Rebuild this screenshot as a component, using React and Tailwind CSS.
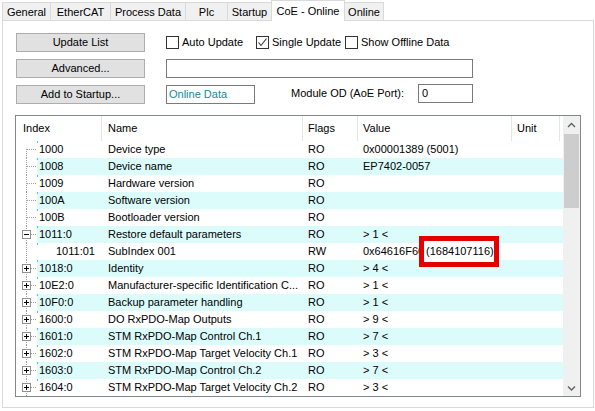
import React from "react";

const tabs = [
  { label: "General", w: "w-[48px]" },
  { label: "EtherCAT", w: "w-[60px]" },
  { label: "Process Data", w: "w-[75px]" },
  { label: "Plc", w: "w-[42px]" },
  { label: "Startup", w: "w-[44px]" },
  { label: "CoE - Online", w: "w-[74px]", active: true },
  { label: "Online", w: "w-[39px]", last: true },
];

const rows = [
  { idx: "1000", name: "Device type", flags: "RO", value: "0x00001389 (5001)" },
  { idx: "1008", name: "Device name", flags: "RO", value: "EP7402-0057" },
  { idx: "1009", name: "Hardware version", flags: "RO", value: "" },
  { idx: "100A", name: "Software version", flags: "RO", value: "" },
  { idx: "100B", name: "Bootloader version", flags: "RO", value: "" },
  { idx: "1011:0", name: "Restore default parameters", flags: "RO", value: "> 1 <", box: "minus" },
  { idx: "1011:01", name: "SubIndex 001", flags: "RW", value: "0x64616F60", child: true },
  { idx: "1018:0", name: "Identity", flags: "RO", value: "> 4 <", box: "plus" },
  { idx: "10E2:0", name: "Manufacturer-specific Identification C...", flags: "RO", value: "> 1 <", box: "plus" },
  { idx: "10F0:0", name: "Backup parameter handling", flags: "RO", value: "> 1 <", box: "plus" },
  { idx: "1600:0", name: "DO RxPDO-Map Outputs", flags: "RO", value: "> 9 <", box: "plus" },
  { idx: "1601:0", name: "STM RxPDO-Map Control Ch.1", flags: "RO", value: "> 7 <", box: "plus" },
  { idx: "1602:0", name: "STM RxPDO-Map Target Velocity Ch.1", flags: "RO", value: "> 3 <", box: "plus" },
  { idx: "1603:0", name: "STM RxPDO-Map Control Ch.2", flags: "RO", value: "> 7 <", box: "plus" },
  { idx: "1604:0", name: "STM RxPDO-Map Target Velocity Ch.2", flags: "RO", value: "> 3 <", box: "plus" },
];

function Btn({ children }) {
  return (
    <div className="w-[129px] h-[19px] bg-[#e1e1e1] border border-[#adadad] flex items-center justify-center">
      {children}
    </div>
  );
}

function Check({ label, checked, w }) {
  return (
    <div className={`flex items-center gap-[3px] ${w}`}>
      <div className="w-[13px] h-[13px] border border-[#333333] bg-white flex items-center justify-center">
        {checked && (
          <svg width="11" height="11" viewBox="0 0 11 11">
            <path d="M1.5 5.5 L4 8.5 L9.5 1.5" fill="none" stroke="#333" strokeWidth="1.1" />
          </svg>
        )}
      </div>
      <span>{label}</span>
    </div>
  );
}

function TreeLines({ first, box, child }) {
  const dot = "#a0a0a0";
  return (
    <svg className="absolute left-0 top-0" width="40" height="17" shapeRendering="crispEdges">
      <line x1="10.5" y1={first ? 8 : 0} x2="10.5" y2="17" stroke={dot} strokeDasharray="1 1" />
      {child ? (
        <>
          <line x1="27.5" y1="0" x2="27.5" y2="9" stroke={dot} strokeDasharray="1 1" />
          <line x1="28" y1="8.5" x2="38" y2="8.5" stroke={dot} strokeDasharray="1 1" />
        </>
      ) : (
        <line x1={box ? 15 : 11} y1="8.5" x2="21" y2="8.5" stroke={dot} strokeDasharray="1 1" />
      )}
      {box && (
        <>
          <rect x="6.5" y="4.5" width="8" height="8" fill="white" stroke="#919191" />
          <line x1="8" y1="8.5" x2="13" y2="8.5" stroke="#000" />
          {box === "plus" && <line x1="10.5" y1="6" x2="10.5" y2="11" stroke="#000" />}
        </>
      )}
    </svg>
  );
}

function Chevron({ down }) {
  return (
    <svg width="9" height="6" viewBox="0 0 9 6">
      <path
        d={down ? "M1 1.5 L4.5 5 L8 1.5" : "M1 5 L4.5 1.5 L8 5"}
        fill="none"
        stroke="#606060"
        strokeWidth="1.4"
      />
    </svg>
  );
}

export default function App() {
  return (
    <div className="w-[595px] h-[411px] bg-white overflow-hidden text-[11px] leading-none text-black font-['Liberation_Sans',Arial,sans-serif]">
      <div className="flex items-end h-[21px] pl-[2px] relative z-10">
        {tabs.map((t) =>
          t.active ? (
            <div
              key={t.label}
              className={`${t.w} h-[21px] bg-white border-x border-t border-[#d9d9d9] flex justify-center pt-[5px]`}
            >
              {t.label}
            </div>
          ) : (
            <div
              key={t.label}
              className={`${t.w} h-[18px] mb-px bg-[#f0f0f0] border-t border-[#d9d9d9] ${
                t.last ? "border-r" : "border-l"
              } flex items-center justify-center pt-px`}
            >
              {t.label}
            </div>
          )
        )}
      </div>

      <div className="ml-[2px] -mt-px w-[592px] h-[388px] border border-[#d9d9d9] pl-[12px] pt-[12px]">
        <div className="flex flex-col gap-[7px] ml-px">
          <div className="flex items-center h-[19px]">
            <Btn>Update List</Btn>
            <div className="ml-[21px] flex items-center">
              <Check label="Auto Update" w="w-[90px]" />
              <Check label="Single Update" checked w="w-[89px]" />
              <Check label="Show Offline Data" w="w-[110px]" />
            </div>
          </div>
          <div className="flex items-center h-[19px]">
            <Btn>Advanced...</Btn>
            <div className="ml-[21px] w-[307px] h-[19px] border border-[#7a7a7a] bg-white" />
          </div>
          <div className="flex items-center h-[19px]">
            <Btn>Add to Startup...</Btn>
            <div className="ml-[21px] w-[89px] h-[19px] border border-[#7a7a7a] bg-white flex items-center pl-[2px] text-[#17899a]">
              Online Data
            </div>
            <span className="ml-[36px] w-[127px] -mt-[3px]">Module OD (AoE Port):</span>
            <div className="w-[55px] h-[19px] -mt-[2px] border border-[#7a7a7a] bg-white flex items-center pl-[3px]">
              0
            </div>
          </div>
        </div>

        <div className="relative mt-[11px] w-[566px] h-[282px] border border-[#828790] flex overflow-hidden">
          <div className="w-[547px] flex flex-col">
            <div className="flex h-[25px] shrink-0">
              <div className="w-[86px] border-r border-[#e5e5e5] flex items-center pl-[7px]">Index</div>
              <div className="w-[201px] border-r border-[#e5e5e5] flex items-center pl-[6px]">Name</div>
              <div className="w-[55px] border-r border-[#e5e5e5] flex items-center pl-[5px]">Flags</div>
              <div className="w-[154px] border-r border-[#e5e5e5] flex items-center pl-[5px]">Value</div>
              <div className="w-[48px] border-r border-[#e5e5e5] flex items-center pl-[5px]">Unit</div>
            </div>
            {rows.map((r, i) => (
              <div key={r.idx} className="relative flex h-[17px] shrink-0">
                <TreeLines first={i === 0} box={r.box} child={r.child} />
                <div className="w-[21px] shrink-0" />
                <div
                  className={`relative flex items-center flex-1 ${i % 2 === 1 ? "bg-[#dcfcfc]" : "bg-white"}`}
                >
                  <span className="absolute left-0 top-0 w-px h-[2px] bg-[#2fd6e6]" />
                  <div className={`w-[65px] ${r.child ? "pl-[19px]" : "pl-[2px]"} whitespace-nowrap`}>{r.idx}</div>
                  <div className="w-[201px] pl-[6px] whitespace-nowrap overflow-hidden">{r.name}</div>
                  <div className="w-[55px] pl-[5px]">{r.flags}</div>
                  <div className="w-[154px] pl-[5px] whitespace-nowrap">{r.value}</div>
                </div>
              </div>
            ))}
          </div>

          <div className="w-[17px] bg-[#f0f0f0] flex flex-col">
            <div className="h-[17px] flex items-center justify-center">
              <Chevron />
            </div>
            <div className="flex-1">
              <div className="mt-px mx-px h-[74px] bg-[#cdcdcd]" />
            </div>
            <div className="h-[17px] flex items-center justify-center">
              <Chevron down />
            </div>
          </div>

          <div className="absolute left-[403px] top-[120px] w-[80px] h-[31px] border-[5px] border-[#e30000] bg-white flex items-center pl-[2px]">
            (1684107116)
          </div>
        </div>
      </div>
    </div>
  );
}
